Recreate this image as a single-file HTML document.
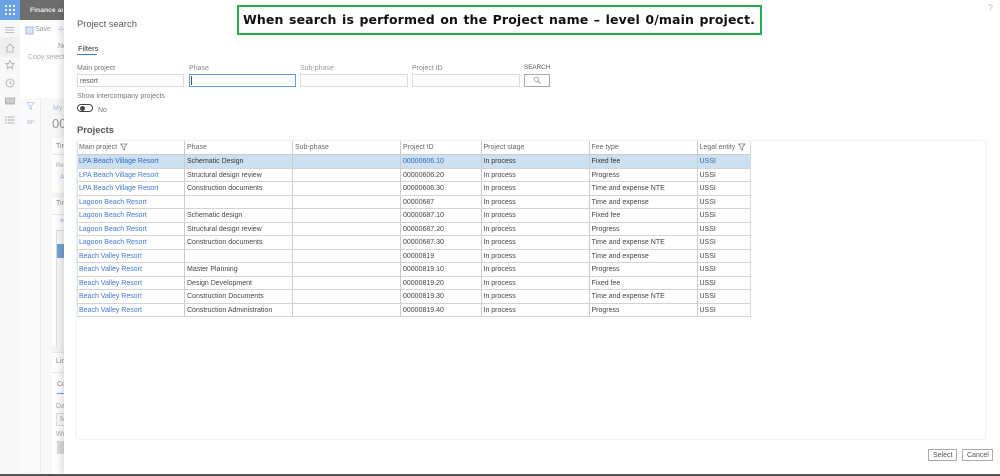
<!DOCTYPE html>
<html><head><meta charset="utf-8"><style>
html,body{margin:0;padding:0;background:#fff}
#p{position:relative;width:1000px;height:476px;overflow:hidden;background:#f8f8f8;font-family:"Liberation Sans",sans-serif;font-size:7px;color:#444;filter:blur(.3px)}
.a{position:absolute;white-space:nowrap}
.b{position:absolute}
table{position:absolute;left:77px;top:141px;border-collapse:collapse;table-layout:fixed;width:672.5px;font-size:7px}
td,th{height:11.5px;padding:1px 0 0 2px;border-right:1px solid #ccc;border-bottom:1px solid #d4d4d4;overflow:hidden;white-space:nowrap;font-weight:normal;text-align:left;line-height:11.5px;box-sizing:content-box}
th{color:#666;border-bottom:1px solid #ccc;padding-top:1px;height:12px}
td:first-child,th:first-child{border-left:1px solid #e4e4e4;padding-left:1px}
td:last-child,th:last-child{border-right:1px solid #ddd}
td.l{color:#3f78d4}
tr.s td{background:#cde0f1;color:#333}
tr.s td.l{color:#2f69c0}
</style></head><body><div id="p">

<!-- background app -->
<div class="b" style="left:0;top:0;width:20px;height:20px;background:#6aa3e3"></div>
<svg class="b" style="left:5px;top:5px" width="10" height="10"><g fill="#e8f1fb"><rect x="0" y="0" width="2" height="2"/><rect x="4" y="0" width="2" height="2"/><rect x="8" y="0" width="2" height="2"/><rect x="0" y="4" width="2" height="2"/><rect x="4" y="4" width="2" height="2"/><rect x="8" y="4" width="2" height="2"/><rect x="0" y="8" width="2" height="2"/><rect x="4" y="8" width="2" height="2"/><rect x="8" y="8" width="2" height="2"/></g></svg>
<div class="b" style="left:20px;top:0;width:44px;height:20px;background:#6e6e6e"></div>
<div class="a" style="left:30px;top:7px;color:#eee;font-weight:bold;font-size:6.8px;width:33px;overflow:hidden">Finance and</div>
<div class="b" style="left:0;top:20px;width:20px;height:456px;background:#f8f8f8;border-right:1px solid #eee"></div>
<div class="b" style="left:20px;top:20px;width:44px;height:78px;background:#fff"></div>
<div class="b" style="left:20px;top:98px;width:20px;height:378px;background:#fafafa;border-right:1px solid #ebebeb"></div>
<div class="b" style="left:0;top:37px;width:20px;height:20px;background:#f0f0f0"></div>
<svg class="b" style="left:0;top:20px" width="64" height="110" fill="none" stroke="#a8a8a8" stroke-width=".8">
<path d="M5 7.500h9M5 10h9M5 12.500h9"/>
<path d="M6 28l4-4 4 4M7 27v5h6v-5" />
<path d="M10 40.500l1.300 2.800 3 .3-2.300 2 .7 3-2.700-1.600-2.700 1.600.7-3-2.300-2 3-.3z"/>
<circle cx="10" cy="63" r="4"/><path d="M10 60.500V63l1.800 1"/>
<rect x="5.500" y="78" width="9" height="6" fill="#ccc"/>
<path d="M5 97h2M8 97h6.500M5 100h2M8 100h6.500M5 103h2M8 103h6.500" stroke="#999"/>
<path d="M27 82.500h7l-2.700 3.500v3.500l-1.600-1v-2.500z" stroke="#b6c6e4"/>
<path d="M27 101h7M27 103h5" stroke="#b6c6e4" stroke-width="1"/>
<rect x="26" y="7" width="7" height="7" stroke="#8faadc" fill="#dbe6f5"/>
<path d="M61 6v7M58 9.500h6" stroke="#bcd0ee"/>
</svg>
<div class="a" style="left:35px;top:26px;color:#999">Save</div>
<div class="a" style="left:58px;top:43px;color:#999">No</div>
<div class="a" style="left:28px;top:54px;color:#aaa;width:36px;overflow:hidden">Copy selected</div>
<div class="a" style="left:53px;top:105px;color:#a9bde6;font-size:7px">My</div>
<div class="a" style="left:52px;top:116px;color:#999;font-size:13px">00</div>
<div class="b" style="left:52px;top:138px;width:12px;height:336px;background:#fff"></div>
<div class="b" style="left:52px;top:154px;width:12px;height:1px;background:#e8e8e8"></div>
<div class="b" style="left:52px;top:193px;width:12px;height:5px;background:#f3f3f3"></div>
<div class="b" style="left:52px;top:214px;width:12px;height:1px;background:#e8e8e8"></div>
<div class="b" style="left:52px;top:352px;width:12px;height:1px;background:#e8e8e8"></div>
<div class="b" style="left:52px;top:372px;width:12px;height:1px;background:#e8e8e8"></div>
<div class="b" style="left:52px;top:345px;width:12px;height:7px;background:#f5f5f5"></div>
<div class="a" style="left:56px;top:143px;color:#888">Tim</div>
<div class="a" style="left:56px;top:163px;color:#aaa;font-size:6px">Re</div>
<div class="a" style="left:60px;top:174px;color:#a9bde6">A</div>
<div class="a" style="left:56px;top:200px;color:#888">Tim</div>
<div class="b" style="left:56px;top:230px;width:8px;height:116px;border-left:1px solid #ddd;border-top:1px solid #ddd;background:#f8f8f8"></div>
<div class="b" style="left:57px;top:244px;width:7px;height:14px;background:#73a1d6"></div>
<div class="a" style="left:59px;top:216px;color:#aac0e8;font-size:10px">+</div>
<div class="a" style="left:56px;top:358px;color:#888">Lin</div>
<div class="a" style="left:57px;top:381px;color:#888">Co</div>
<div class="b" style="left:57px;top:393px;width:7px;height:1px;background:#6e9fdc"></div>
<div class="a" style="left:56px;top:403px;color:#aaa">Da</div>
<div class="b" style="left:56px;top:413px;width:8px;height:11px;border:1px solid #ddd;background:#fbfbfb"></div>
<div class="a" style="left:60px;top:416px;color:#aaa">M</div>
<div class="a" style="left:56px;top:431px;color:#aaa">We</div>
<div class="b" style="left:57px;top:441px;width:7px;height:13px;background:#ddd"></div>

<!-- dialog -->
<div class="b" style="left:64px;top:0;width:936px;height:474px;background:#fff;box-shadow:-3px 0 7px rgba(0,0,0,.13)"></div>
<div class="b" style="left:0;top:474px;width:1000px;height:2px;background:#555"></div>
<div class="a" style="left:77px;top:18px;font-size:9.4px;color:#555">Project search</div>
<div class="a" style="left:988px;top:3px;font-size:9px;color:#bbb">?</div>

<div class="b" style="left:237px;top:5px;width:525px;height:30px;border:2px solid #22b14c;box-sizing:border-box;background:#fff"></div>
<div class="a" style="left:243px;top:12px;font-family:'DejaVu Sans',sans-serif;font-size:12.5px;font-weight:bold;color:#111;letter-spacing:.12px;word-spacing:1px">When search is performed on the Project name – level 0/main project.</div>

<div class="a" style="left:78px;top:43.500px;font-size:7.500px;color:#333">Filters</div>
<div class="b" style="left:77px;top:54px;width:20px;height:1px;background:#3a7fd5"></div>

<div class="a" style="left:77px;top:65px;color:#777">Main project</div>
<div class="a" style="left:189px;top:65px;color:#888">Phase</div>
<div class="a" style="left:300px;top:65px;color:#999">Sub-phase</div>
<div class="a" style="left:412px;top:65px;color:#888">Project ID</div>
<div class="a" style="left:524px;top:64px;color:#555;font-size:6.300px">SEARCH</div>

<div class="b" style="left:77px;top:74px;width:107px;height:13px;border:1px solid #ddd;box-sizing:border-box"></div>
<div class="a" style="left:80px;top:77.500px;color:#555">resort</div>
<div class="b" style="left:189px;top:74px;width:107px;height:13px;border:1px solid #5f9fe0;box-sizing:border-box"></div>
<div class="b" style="left:191px;top:76px;width:1px;height:9px;background:#555"></div>
<div class="b" style="left:300px;top:74px;width:108px;height:13px;border:1px solid #ddd;box-sizing:border-box"></div>
<div class="b" style="left:412px;top:74px;width:108px;height:13px;border:1px solid #ddd;box-sizing:border-box"></div>
<div class="b" style="left:524px;top:74px;width:26px;height:13px;border:1px solid #aaa;box-sizing:border-box"></div>
<svg class="b" style="left:533px;top:76px" width="9" height="9" fill="none" stroke="#999" stroke-width=".8"><circle cx="3.500" cy="3.500" r="2.300"/><path d="M5.200 5.200l2.500 2.500"/></svg>

<div class="a" style="left:77px;top:93px;color:#777">Show intercompany projects</div>
<div class="b" style="left:77px;top:104px;width:16px;height:8px;border:1px solid #444;border-radius:5px;box-sizing:border-box"></div>
<div class="b" style="left:80px;top:105.500px;width:5px;height:5px;border-radius:50%;background:#444"></div>
<div class="a" style="left:98px;top:106.500px;color:#777">No</div>

<div class="a" style="left:77px;top:124px;font-size:9.400px;font-weight:bold;color:#555">Projects</div>

<div class="b" style="left:77px;top:141px;width:908px;height:298px;box-shadow:0 0 2px rgba(0,0,0,.15)"></div>

<table>
<colgroup><col style="width:107px"><col style="width:108px"><col style="width:108px"><col style="width:80.500px"><col style="width:108px"><col style="width:108px"><col style="width:53px"></colgroup>
<tr><th>Main project</th><th>Phase</th><th>Sub-phase</th><th>Project ID</th><th>Project stage</th><th>Fee type</th><th>Legal entity</th></tr>
<tr class="s"><td class="l">LPA Beach Village Resort</td><td>Schematic Design</td><td></td><td class="l">00000606.10</td><td>In process</td><td>Fixed fee</td><td class="l">USSI</td></tr>
<tr><td class="l">LPA Beach Village Resort</td><td>Structural design review</td><td></td><td>00000606.20</td><td>In process</td><td>Progress</td><td>USSI</td></tr>
<tr><td class="l">LPA Beach Village Resort</td><td>Construction documents</td><td></td><td>00000606.30</td><td>In process</td><td>Time and expense NTE</td><td>USSI</td></tr>
<tr><td class="l">Lagoon Beach Resort</td><td></td><td></td><td>00000687</td><td>In process</td><td>Time and expense</td><td>USSI</td></tr>
<tr><td class="l">Lagoon Beach Resort</td><td>Schematic design</td><td></td><td>00000687.10</td><td>In process</td><td>Fixed fee</td><td>USSI</td></tr>
<tr><td class="l">Lagoon Beach Resort</td><td>Structural design review</td><td></td><td>00000687.20</td><td>In process</td><td>Progress</td><td>USSI</td></tr>
<tr><td class="l">Lagoon Beach Resort</td><td>Construction documents</td><td></td><td>00000687.30</td><td>In process</td><td>Time and expense NTE</td><td>USSI</td></tr>
<tr><td class="l">Beach Valley Resort</td><td></td><td></td><td>00000819</td><td>In process</td><td>Time and expense</td><td>USSI</td></tr>
<tr><td class="l">Beach Valley Resort</td><td>Master Planning</td><td></td><td>00000819.10</td><td>In process</td><td>Progress</td><td>USSI</td></tr>
<tr><td class="l">Beach Valley Resort</td><td>Design Development</td><td></td><td>00000819.20</td><td>In process</td><td>Fixed fee</td><td>USSI</td></tr>
<tr><td class="l">Beach Valley Resort</td><td>Construction Documents</td><td></td><td>00000819.30</td><td>In process</td><td>Time and expense NTE</td><td>USSI</td></tr>
<tr><td class="l">Beach Valley Resort</td><td>Construction Administration</td><td></td><td>00000819.40</td><td>In process</td><td>Progress</td><td>USSI</td></tr>
</table>
<svg class="b" style="left:120px;top:143px" width="8" height="8" fill="none" stroke="#777" stroke-width=".7"><path d="M.5 1h6.500L4.700 4v3L3 6V4z"/></svg>
<svg class="b" style="left:738px;top:143px" width="8" height="8" fill="none" stroke="#777" stroke-width=".7"><path d="M.5 1h6.500L4.700 4v3L3 6V4z"/></svg>

<div class="b" style="left:928px;top:449px;width:29px;height:12px;border:1px solid #aaa;box-sizing:border-box"></div>
<div class="a" style="left:933px;top:451.500px;color:#555">Select</div>
<div class="b" style="left:962px;top:449px;width:31px;height:12px;border:1px solid #aaa;box-sizing:border-box"></div>
<div class="a" style="left:967px;top:451.500px;color:#555">Cancel</div>
</div></body></html>
